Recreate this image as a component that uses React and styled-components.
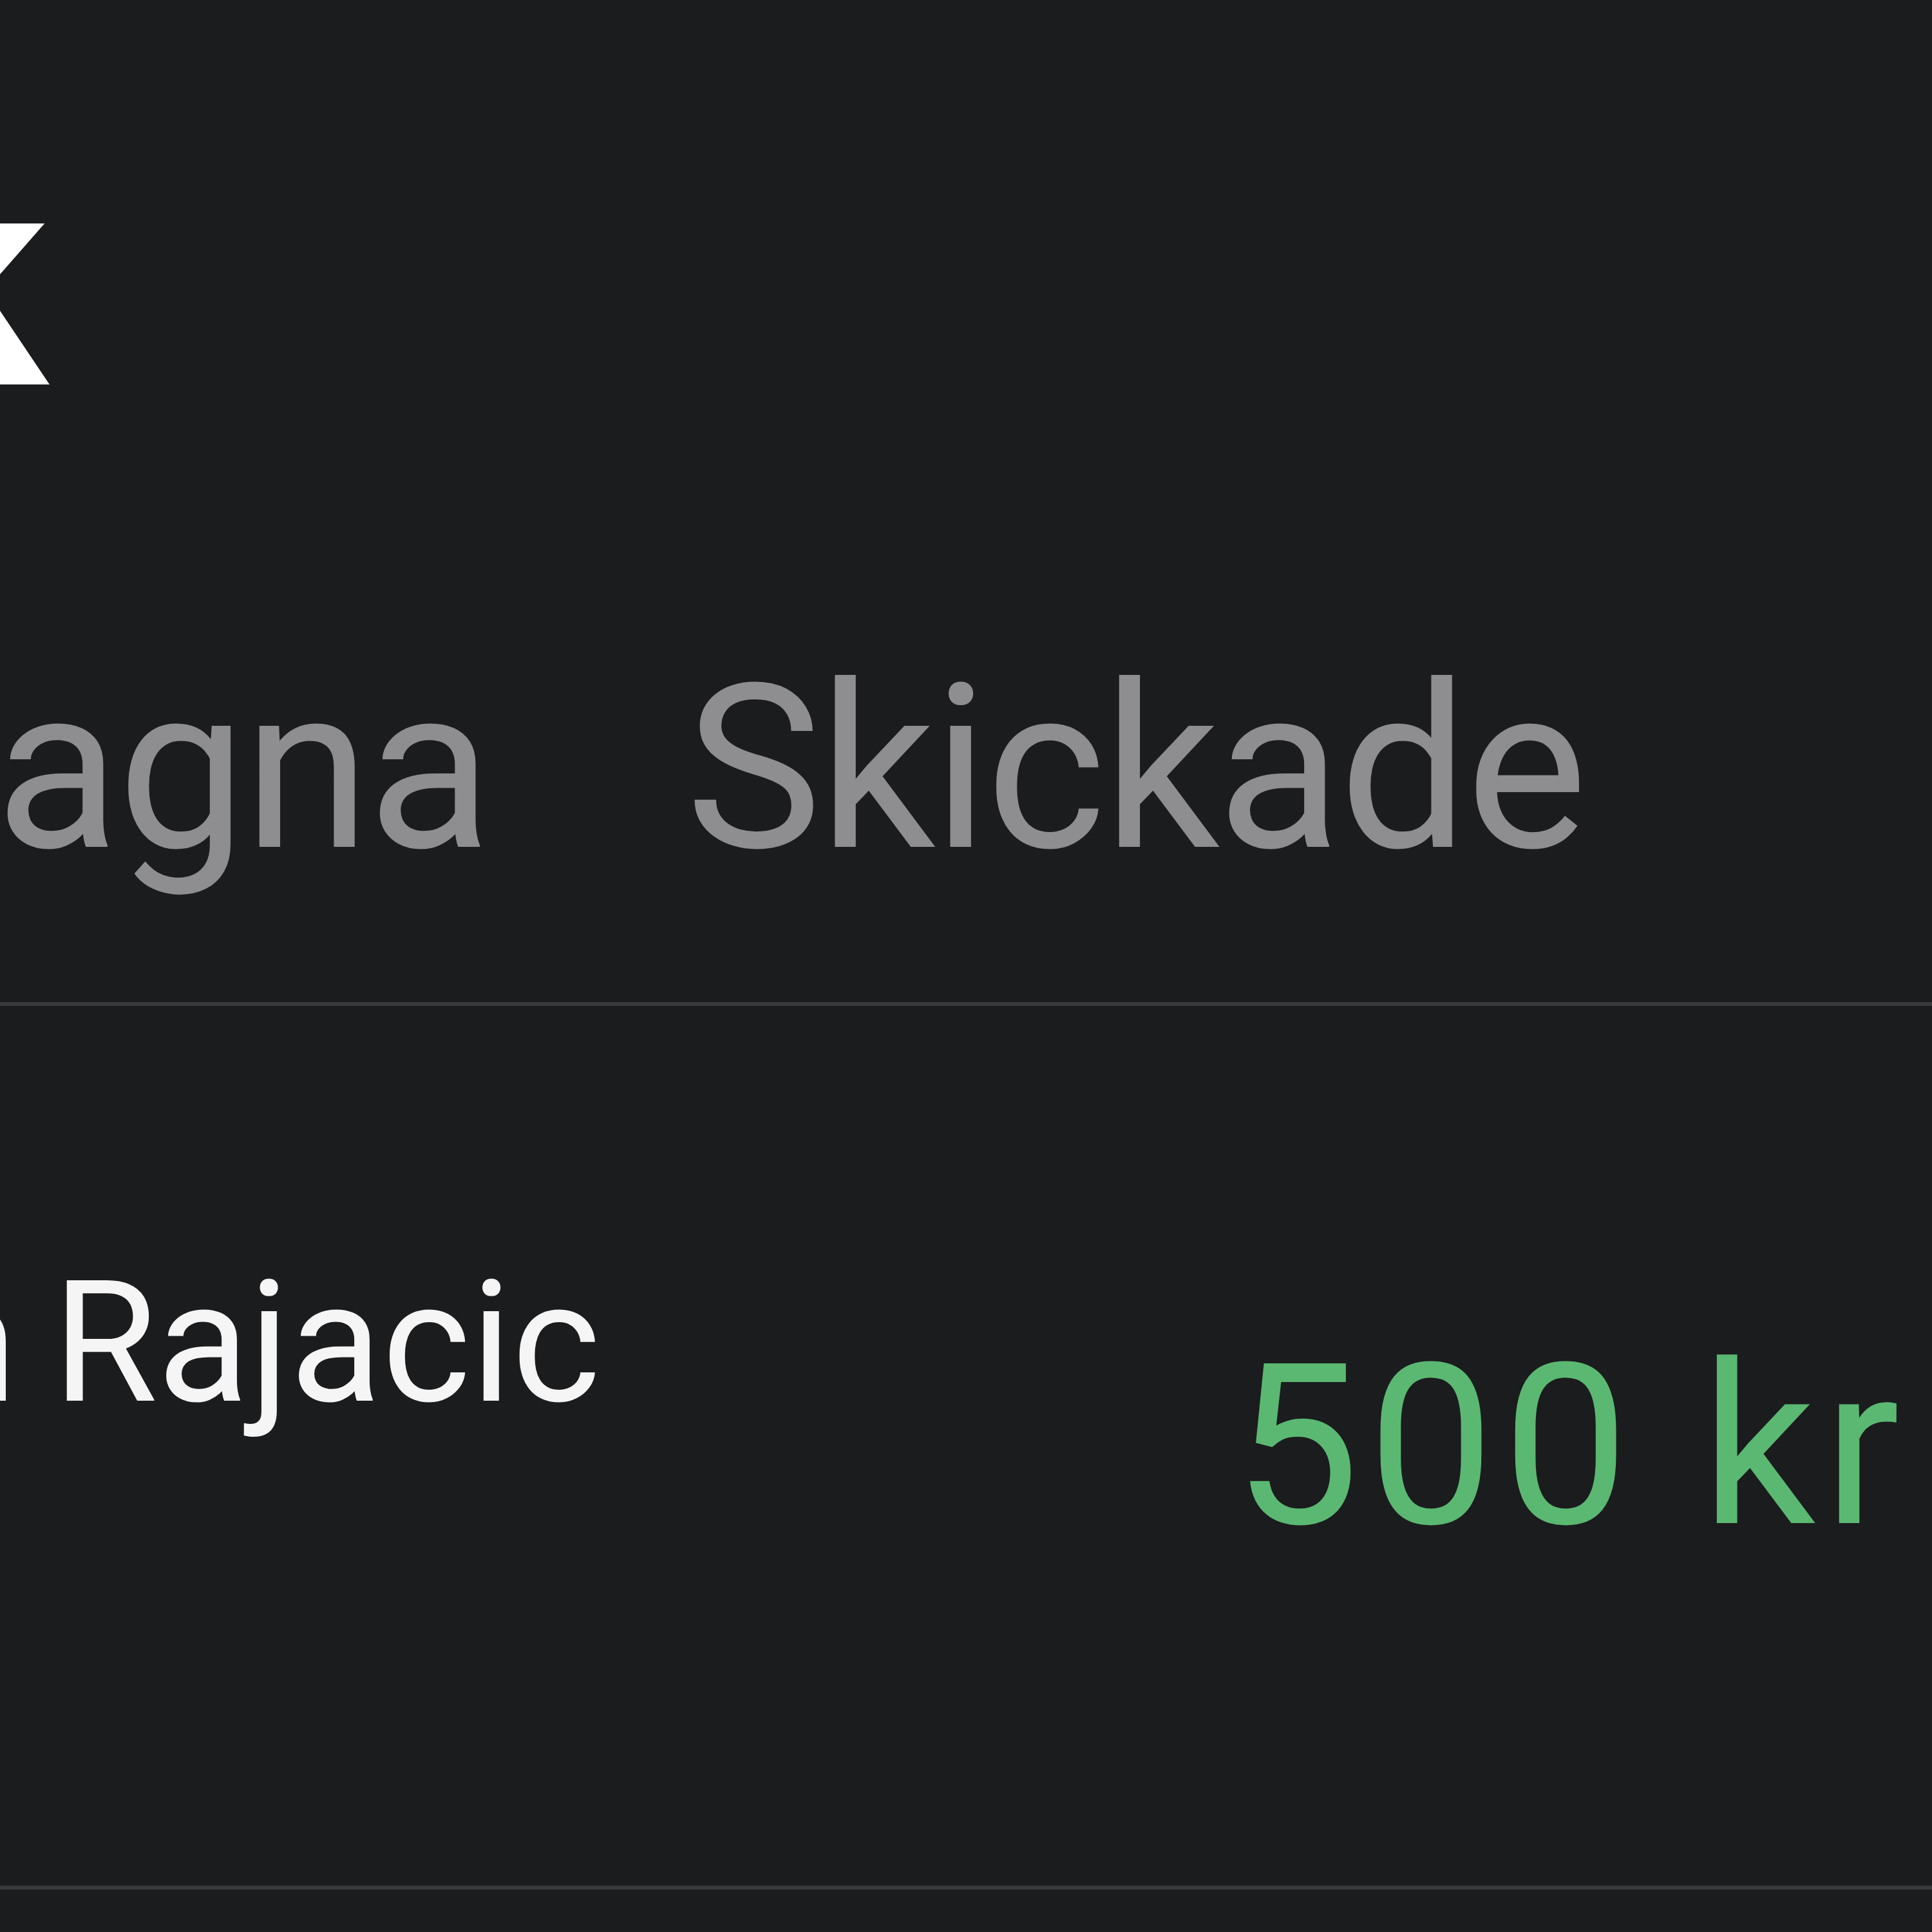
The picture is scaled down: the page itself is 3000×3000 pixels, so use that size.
import React from "react";
import styled, { createGlobalStyle } from "styled-components";

const GlobalStyle = createGlobalStyle`
  html, body {
    margin: 0;
    padding: 0;
    background: #1b1c1e;
  }
  #root {
    width: 3000px;
    height: 3000px;
    overflow: hidden;
  }
`;

const Screen = styled.div`
  width: 3000px;
  height: 3000px;
  background: #1b1c1e;
  font-family: Roboto, "Noto Sans", sans-serif;
  display: flex;
  flex-direction: column;
`;

const Header = styled.header`
  padding-top: 199px;
  height: 473px;
`;

const Title = styled.h1`
  margin: 0 0 0 -1602px;
  font-size: 473px;
  line-height: 1;
  font-weight: 700;
  color: #ffffff;
  white-space: nowrap;
`;

const TabBar = styled.nav`
  display: flex;
  gap: 304px;
  margin-top: 344px;
  padding-bottom: 184px;
  border-bottom: 6px solid #3a3a3c;
  margin-left: -738px;
`;

const Tab = styled.span`
  font-size: 356px;
  line-height: 1;
  letter-spacing: -4px;
  color: ${p => (p.active ? "#ffffff" : "#8e8e91")};
  white-space: nowrap;
`;

const Row = styled.div`
  display: flex;
  align-items: center;
  justify-content: space-between;
  height: 1366px;
  padding-right: 37px;
  border-bottom: 6px solid #3a3a3c;
`;

const Who = styled.div`
  display: flex;
  flex-direction: column;
  margin-left: -619px;
  margin-bottom: 319px;
`;

const Name = styled.span`
  font-size: 263px;
  line-height: 1;
  word-spacing: -10px;
  color: #f5f5f5;
  white-space: nowrap;
`;

const Amount = styled.span`
  font-size: 349px;
  line-height: 1;
  letter-spacing: 13px;
  color: ${p => (p.negative ? "#e05a5a" : "#5bb872")};
  white-space: nowrap;
`;

export default function App() {
  return (
    <>
      <GlobalStyle />
      <Screen>
        <Header>
          <Title>Historik</Title>
        </Header>
        <TabBar>
          <Tab>Mottagna</Tab>
          <Tab>Skickade</Tab>
        </TabBar>
        <Row>
          <Who>
            <Name>Milan Rajacic</Name>
          </Who>
          <Amount>500 kr</Amount>
        </Row>
      </Screen>
    </>
  );
}
